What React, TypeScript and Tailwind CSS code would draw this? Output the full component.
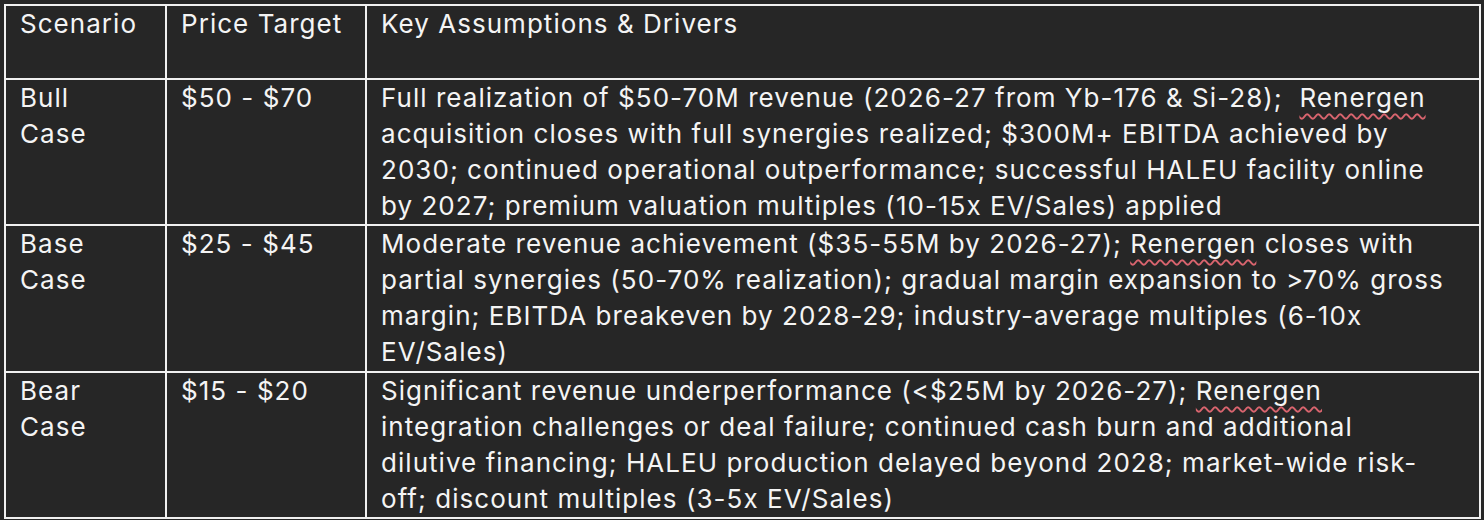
import React from "react";

type Row = {
  scenario: string[];
  price: string;
  lines: React.ReactNode[];
  h: string;
};

const Spell = ({ children }: { children: React.ReactNode }) => (
  <span className="underline decoration-wavy decoration-[#d9646e] decoration-[1.5px] underline-offset-[6px]">
    {children}
  </span>
);

const rows: Row[] = [
  {
    scenario: ["Bull", "Case"],
    price: "$50 - $70",
    h: "h-[145px]",
    lines: [
      <>Full realization of $50-70M revenue (2026-27 from Yb-176 &amp; Si-28);&nbsp; <Spell>Renergen</Spell></>,
      "acquisition closes with full synergies realized; $300M+ EBITDA achieved by",
      "2030; continued operational outperformance; successful HALEU facility online",
      "by 2027; premium valuation multiples (10-15x EV/Sales) applied",
    ],
  },
  {
    scenario: ["Base", "Case"],
    price: "$25 - $45",
    h: "h-[147px]",
    lines: [
      <>Moderate revenue achievement ($35-55M by 2026-27); <Spell>Renergen</Spell> closes with</>,
      "partial synergies (50-70% realization); gradual margin expansion to >70% gross",
      "margin; EBITDA breakeven by 2028-29; industry-average multiples (6-10x",
      "EV/Sales)",
    ],
  },
  {
    scenario: ["Bear", "Case"],
    price: "$15 - $20",
    h: "h-[146px]",
    lines: [
      <>Significant revenue underperformance (&lt;$25M by 2026-27); <Spell>Renergen</Spell></>,
      "integration challenges or deal failure; continued cash burn and additional",
      "dilutive financing; HALEU production delayed beyond 2028; market-wide risk-",
      "off; discount multiples (3-5x EV/Sales)",
    ],
  },
];

const cell = "border-2 border-[#f0f0f0] align-top pl-[14px] pr-2 pt-0";

export default function App() {
  return (
    <div
      className="w-[1484px] h-[520px] bg-[#262626] pt-[4px] pl-[4px] text-[#f4f4f4] text-[26px] leading-[36px] tracking-[0.04em]"
      style={{ fontFamily: "Inter, 'Noto Sans', sans-serif" }}
    >
      <table className="table-fixed border-collapse w-[1477px]">
        <colgroup>
          <col className="w-[161px]" />
          <col className="w-[200px]" />
          <col />
        </colgroup>
        <thead>
          <tr className="h-[74px]">
            <th className={`${cell} font-normal text-left`}>Scenario</th>
            <th className={`${cell} font-normal text-left`}>Price Target</th>
            <th className={`${cell} font-normal text-left`}>Key Assumptions &amp; Drivers</th>
          </tr>
        </thead>
        <tbody>
          {rows.map((r) => (
            <tr key={r.price} className={r.h}>
              <td className={cell}>
                {r.scenario.map((s) => (
                  <div key={s}>{s}</div>
                ))}
              </td>
              <td className={cell}>{r.price}</td>
              <td className={cell}>
                {r.lines.map((l, i) => (
                  <div key={i} className="whitespace-nowrap">
                    {l}
                  </div>
                ))}
              </td>
            </tr>
          ))}
        </tbody>
      </table>
    </div>
  );
}
